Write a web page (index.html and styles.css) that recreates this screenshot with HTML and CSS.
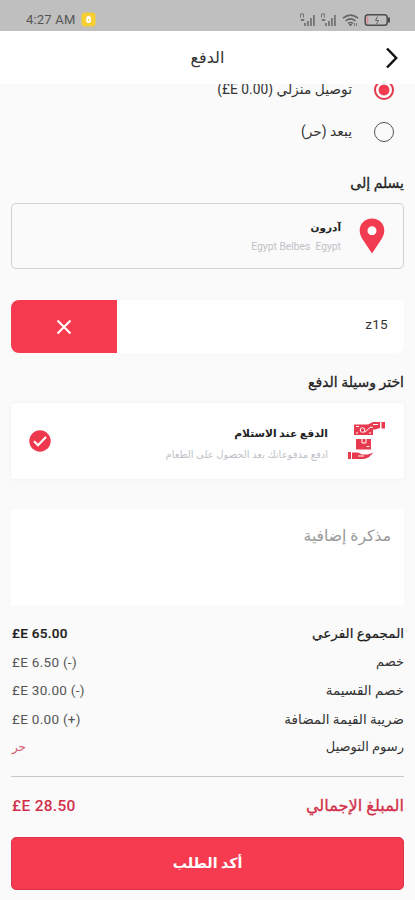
FILE: index.html
```html
<!DOCTYPE html>
<html lang="ar" dir="rtl">
<head>
<meta charset="utf-8">
<title>الدفع</title>
<link rel="stylesheet" href="styles.css">
</head>
<body>
<div class="status" dir="ltr">
  <span class="time">4:27 AM</span>
  <svg class="badge" width="15" height="15" viewBox="0 0 15 15"><rect x=".5" y=".5" width="14" height="14" rx="3.5" fill="#f6ce32"/><path d="M5.2 5.5 7 3.8h1.6l1.4 1.6v4.2l-1.2 1.3H6.3l-1.1-1.2z" fill="#fff"/><path d="M6.8 7h1.6v1.5H6.8z" fill="#f6ce32"/></svg>
  <svg class="signals" width="92" height="16" viewBox="0 0 92 16" fill="none">
    <g id="sig" fill="#747474"><path d="M5 11h1.8v3H5zM8 9h1.8v5H8zM11 6h1.8v8H11zM14 3h1.8v11H14z"/><path d="M1.5 5.500V2h3v3.500M2 7.500h3v1H2z" fill="none" stroke="#747474"/></g>
    <use href="#sig" x="21"/>
    <g stroke="#666" stroke-width="1.6"><path d="M44 6.200q7.500-6.200 15 0M46.500 9q5-4.200 10 0M49 11.500q2.500-2 5 0"/></g>
    <path d="m49.500 12 2 2.500 2-2.500z" fill="#666"/><path d="M55.500 11v3M57.500 11v3" stroke="#777"/>
    <rect x="66.200" y="2.700" width="22" height="10.600" rx="2.800" stroke="#4d4d4d" stroke-width="1.500"/>
    <path d="M90 5.500v5" stroke="#4d4d4d" stroke-width="2"/><path d="M68.500 4.500v7" stroke="#df8c93" stroke-width="1.500"/><path d="m78.500 4.500-2 4h3l-2 3.500" stroke="#666"/>
  </svg>
</div>
<header class="bar">
  <svg class="back" width="14" height="22" viewBox="0 0 14 22"><path d="m2 1.500 9.200 9.500L2 20.500" fill="none" stroke="#111" stroke-width="2.500"/></svg>
  <h1 class="t title">الدفع</h1>
</header>
<main>
  <div class="options">
    <div class="option"><i class="radio on"></i><span class="t">توصيل منزلي <bdi dir="ltr">(£E 0.00)</bdi></span></div>
    <div class="option"><i class="radio"></i><span class="t">يبعد (حر)</span></div>
  </div>
  <h2 class="t h1">يسلم إلى</h2>
  <section class="address">
    <svg class="pin" width="26" height="36" viewBox="0 0 26 36"><path d="M13 .5C5.900.5.700 5.700.700 12.500c0 3.400 1.300 6.100 3.200 9.200L13 35.500l9.100-13.800c1.900-3.100 3.200-5.800 3.200-9.200C25.300 5.700 20.100.5 13 .5zm0 7.800a4.500 4.500 0 1 1 0 9 4.500 4.500 0 0 1 0-9z" fill="#f13b50"/></svg>
    <div class="lines"><strong class="t a1">آدرون</strong><span class="t a2"><bdi dir="ltr">Egypt Belbes&nbsp; Egypt</bdi></span></div>
  </section>
  <section class="coupon">
    <span class="t code">z15</span>
    <div class="remove"><svg width="16" height="16" viewBox="0 0 16 16"><path d="m1.500 1.500 13 13m0-13-13 13" stroke="#fff" stroke-width="2"/></svg></div>
  </section>
  <h2 class="t h2">اختر وسيلة الدفع</h2>
  <section class="pay">
    <svg class="cash" width="40" height="40" viewBox="0 0 40 40">
      <g fill="#e73a4f"><path d="M7 3.500h14l5-2.500h7v6l-5 1.500h-2V14H7zM34.500 1H38v6.500h-3.500zM9 18h15v10.500H9zM1 31h3v7H1zM5 31.500h6l4 2h6l5.500-2-5 5-4.500 1.500H5z"/></g>
      <g fill="none" stroke="#fff"><circle cx="15.500" cy="9" r="2.300"/><path d="m17.500 11.500 5.500-5 3-.5M9 5.500h3M9 12h2M22 12h2M15 18v4h4v-4M19.500 25.500h3M11 35h6M26 3.500h5"/></g>
    </svg>
    <div class="lines"><strong class="t p1">الدفع عند الاستلام</strong><span class="t p2">ادفع مدفوعاتك بعد الحصول على الطعام</span></div>
    <svg class="check" width="22" height="22" viewBox="0 0 22 22"><circle cx="11" cy="11" r="10.700" fill="#ee384e"/><path d="m5 11.200 4 4 8-8.200" fill="none" stroke="#fff" stroke-width="2.200"/></svg>
  </section>
  <section class="note"><span class="t n1">مذكرة إضافية</span></section>
  <dl class="sums">
    <div class="strong"><dt class="t">المجموع الفرعي</dt><dd dir="ltr">£E 65.00</dd></div>
    <div><dt class="t s2">خصم</dt><dd dir="ltr">£E 6.50 (-)</dd></div>
    <div><dt class="t">خصم القسيمة</dt><dd dir="ltr">£E 30.00 (-)</dd></div>
    <div><dt class="t">ضريبة القيمة المضافة</dt><dd dir="ltr">£E 0.00 (+)</dd></div>
    <div><dt class="t s5">رسوم التوصيل</dt><dd class="free">حر</dd></div>
  </dl>
  <div class="total"><span class="t s6">المبلغ الإجمالي</span><b dir="ltr">£E 28.50</b></div>
  <button class="confirm"><span class="t c1">أكد الطلب</span></button>
</main>
</body>
</html>
```
FILE: styles.css
```css
* { box-sizing: border-box; margin: 0; }
body { width: 415px; height: 900px; overflow: hidden; background: #fafafa; color: #333; font: 13px/20px Roboto, "DejaVu Sans", sans-serif; }
svg { display: block; flex: none; }
.t { display: block; white-space: nowrap; font-weight: 400; }
.status { height: 31px; background: #bfbfbf; display: flex; align-items: center; padding: 8px 24px 0 26px; }
.time { font-size: 13px; color: #555; letter-spacing: .2px; width: 55px; }
.signals { margin-left: auto; }
.bar { height: 53px; background: #fff; display: grid; grid-template-columns: 60px 1fr 60px; align-items: center; }
.back { margin-right: 16px; }
.title { text-align: center; font-size: 16px; line-height: 20px; }
main { height: 816px; overflow: hidden; padding: 0 11px; }
.options { margin-top: -15px; }
.option { height: 42px; display: flex; align-items: center; gap: 22px; padding-right: 10px; }
.radio { width: 20px; height: 20px; border: 1.500px solid #555; border-radius: 50%; }
.radio.on { border: 2px solid #e8374d; background: radial-gradient(#f13b50 5px, transparent 5.800px); }
.option .t { font-size: 13.800px; padding-bottom: 2px; }
h2.t { font-size: 14px; color: #222; line-height: 20px; -webkit-text-stroke: .3px; }
.h1 { margin: 20px 0 10px; }
.address { height: 66px; border: 1.500px solid #cfd0d2; border-radius: 5px; display: flex; align-items: center; padding-right: 18px; gap: 18px; }
.a1, .p1 { font-size: 10.700px; color: #222; font-weight: 700; }
.a1 { font-size: 10.500px; }
.a2, .p2 { font-size: 10.300px; color: #bec2c8; line-height: 17px; }
.p2 { font-size: 10px; line-height: 22px; }
.pay .lines { padding-top: 8px; }
.coupon { margin-top: 31px; height: 53px; background: #fff; border-radius: 8px; overflow: hidden; display: flex; justify-content: space-between; align-items: center; }
.code { padding: 0 16px 5px 0; font-size: 13.500px; letter-spacing: .3px; }
.remove { width: 106px; height: 53px; background: #f63b50; display: grid; place-items: center; }
.h2 { margin: 19px 0 11px; }
.pay { height: 76px; background: #fff; border-radius: 3px; box-shadow: 0 0 4px #0000000d; display: flex; align-items: center; padding: 0 17px 0 18px; gap: 19px; }
.check { margin-right: auto; }
.note { margin-top: 31px; height: 96px; background: #fff; padding: 16px 13px; }
.n1 { font-size: 15.600px; color: #999; }
.sums { margin-top: 13px; height: 157px; }
.sums > div { height: 28.500px; display: flex; align-items: center; justify-content: space-between; }
.sums dt { font-size: 13.500px; }
.sums .s2, .sums .s5 { font-size: 13px; }
dd { font-size: 13.500px; color: #555; letter-spacing: .3px; padding-left: 1px; }
.strong dt, .strong dd { color: #222; font-weight: 500; -webkit-text-stroke: .2px; }
.sums .free { color: #d25a70; font-size: 12px; }
.total { height: 59px; border-top: 1px solid #c8c8c8; display: flex; align-items: center; justify-content: space-between; color: #d2304a; }
.total b { font-size: 15.500px; font-weight: 500; letter-spacing: .3px; padding-left: 1px; }
.s6 { font-size: 16.200px; -webkit-text-stroke: .3px; }
.confirm { display: block; margin-top: 2px; width: 100%; height: 53px; border: 1px solid #d93449; border-radius: 5px; background: #f63b50; color: #fff; font: inherit; }
.c1 { text-align: center; font-size: 14.200px; font-weight: 700; padding-bottom: 2px; }
```
